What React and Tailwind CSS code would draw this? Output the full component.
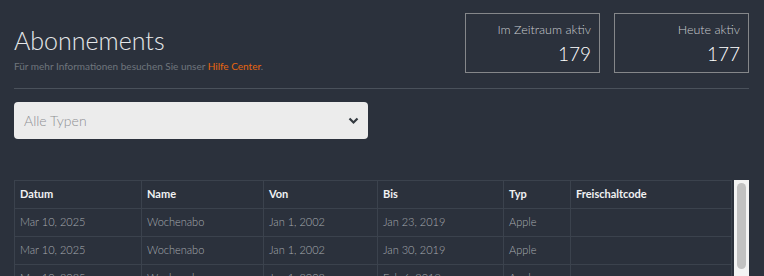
const rows = [
  { datum: 'Mar 10, 2025', name: 'Wochenabo', von: 'Jan 1, 2002', bis: 'Jan 23, 2019', typ: 'Apple', code: '' },
  { datum: 'Mar 10, 2025', name: 'Wochenabo', von: 'Jan 1, 2002', bis: 'Jan 30, 2019', typ: 'Apple', code: '' },
  { datum: 'Mar 10, 2025', name: 'Wochenabo', von: 'Jan 1, 2002', bis: 'Feb 6, 2019', typ: 'Apple', code: '' },
]

function StatBox({ label, value }) {
  return (
    <div className="w-[135px] h-[60px] border border-[#85878a] flex flex-col items-end pr-[8px] pt-[8px]">
      <span className="text-[12.5px] font-light text-[#c9ccd0] leading-[16px]">{label}</span>
      <span className="text-[19px] font-light text-white leading-[22px] mt-[5px]">{value}</span>
    </div>
  )
}

export default function App() {
  return (
    <div className="w-[764px] h-[276px] overflow-hidden bg-[#2b313c] font-['Lato',sans-serif]">
      <div className="pl-[14px] pr-[15px]">
        <div className="flex justify-between pt-[13px]">
          <div className="pt-[13px]">
            <h1 className="text-[25px] font-light text-[#e6e8ea] leading-[28px]">Abonnements</h1>
            <p className="text-[10px] text-[#6f757d] mt-[5px]">
              Für mehr Informationen besuchen Sie unser <span className="text-[#e8650f]">Hilfe Center</span>.
            </p>
          </div>
          <div className="flex gap-[14px]">
            <StatBox label="Im Zeitraum aktiv" value="179" />
            <StatBox label="Heute aktiv" value="177" />
          </div>
        </div>
        <div className="h-px bg-[#4a515b] mt-[14px]" />
        <div className="mt-[13px] w-[354px] h-[37px] bg-[#ececec] rounded-[4px] flex items-center justify-between pl-[10px] pr-[9px]">
          <span className="text-[14px] font-light text-[#8e9094]">Alle Typen</span>
          <svg width="11" height="8" viewBox="0 0 11 8" fill="none">
            <path d="M1.5 1.5 L5.5 5.5 L9.5 1.5" stroke="#343a40" strokeWidth="2.2" />
          </svg>
        </div>
        <div className="mt-[41px] flex gap-[2px]">
          <table className="w-[719px] border-collapse text-[11px] table-fixed">
            <colgroup>
              <col className="w-[127px]" />
              <col className="w-[122px]" />
              <col className="w-[114px]" />
              <col className="w-[126px]" />
              <col className="w-[67px]" />
              <col />
            </colgroup>
            <thead>
              <tr className="h-[28px]">
                {['Datum', 'Name', 'Von', 'Bis', 'Typ', 'Freischaltcode'].map((h) => (
                  <th key={h} className="border border-[#3b424d] text-left font-bold text-[#f1f2f3] px-[5px]">{h}</th>
                ))}
              </tr>
            </thead>
            <tbody>
              {rows.map((r, i) => (
                <tr key={i} className="h-[28px]">
                  {[r.datum, r.name, r.von, r.bis, r.typ, r.code].map((c, j) => (
                    <td key={j} className="border border-[#3b424d] text-[#a7abb0] font-light px-[5px]">{c}</td>
                  ))}
                </tr>
              ))}
            </tbody>
          </table>
          <div className="w-[15px] h-[96px] bg-[#f3f3f3] shrink-0 pt-[3px] px-[3px]">
            <div className="h-[86px] rounded-full bg-[#c1c1c1]" />
          </div>
        </div>
      </div>
    </div>
  )
}
